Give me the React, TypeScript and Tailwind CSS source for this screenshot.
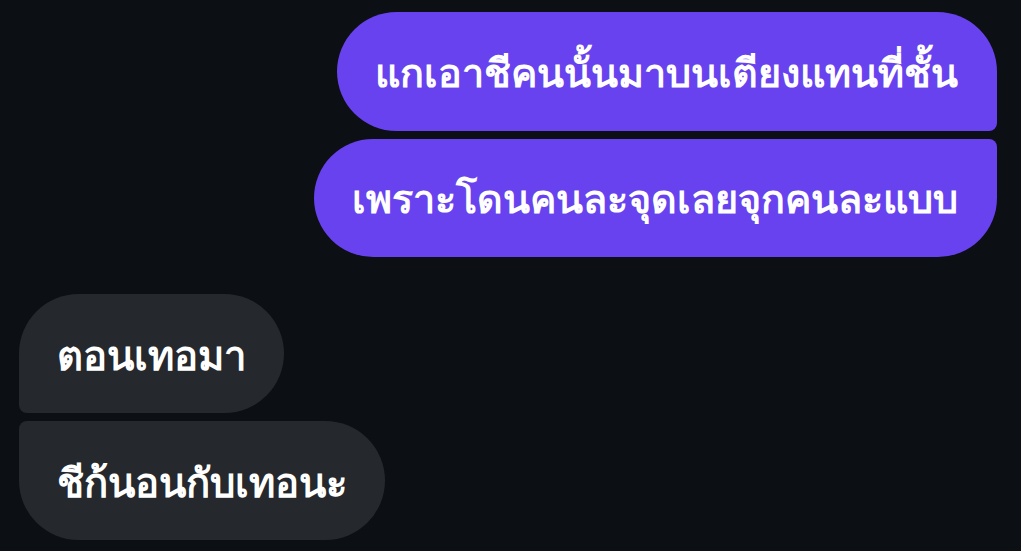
import React from "react";

const font = { fontFamily: '"Noto Sans", "DejaVu Sans", "Liberation Sans", sans-serif' };

export default function App() {
  return (
    <div className="w-[1021px] h-[551px] bg-[#0c0f13] overflow-hidden flex flex-col" style={font}>
      <div className="flex flex-col items-end gap-[8px] pt-[12px] pr-[24px]">
        <div className="h-[119px] flex items-center pl-[38px] pr-[39px] pt-[2px] bg-[#6742ee] text-white font-bold text-[39.5px] rounded-[60px] rounded-br-[8px]">
          แกเอาชีคนนั้นมาบนเตียงแทนที่ชั้น
        </div>
        <div className="h-[118px] flex items-center pl-[38px] pr-[39px] pt-[2px] bg-[#6742ee] text-white font-bold text-[39.5px] rounded-[60px] rounded-tr-[8px]">
          เพราะโดนคนละจุดเลยจุกคนละแบบ
        </div>
      </div>
      <div className="flex flex-col items-start gap-[8px] pt-[37px] pl-[19px]">
        <div className="h-[119px] flex items-center px-[38px] pt-[2px] bg-[#25282c] text-white font-bold text-[40px] rounded-[60px] rounded-bl-[8px]">
          ตอนเทอมา
        </div>
        <div className="h-[119px] flex items-center px-[38px] pt-[2px] bg-[#25282c] text-white font-bold text-[40px] rounded-[60px] rounded-tl-[8px]">
          ชีก้นอนกับเทอนะ
        </div>
      </div>
    </div>
  );
}
